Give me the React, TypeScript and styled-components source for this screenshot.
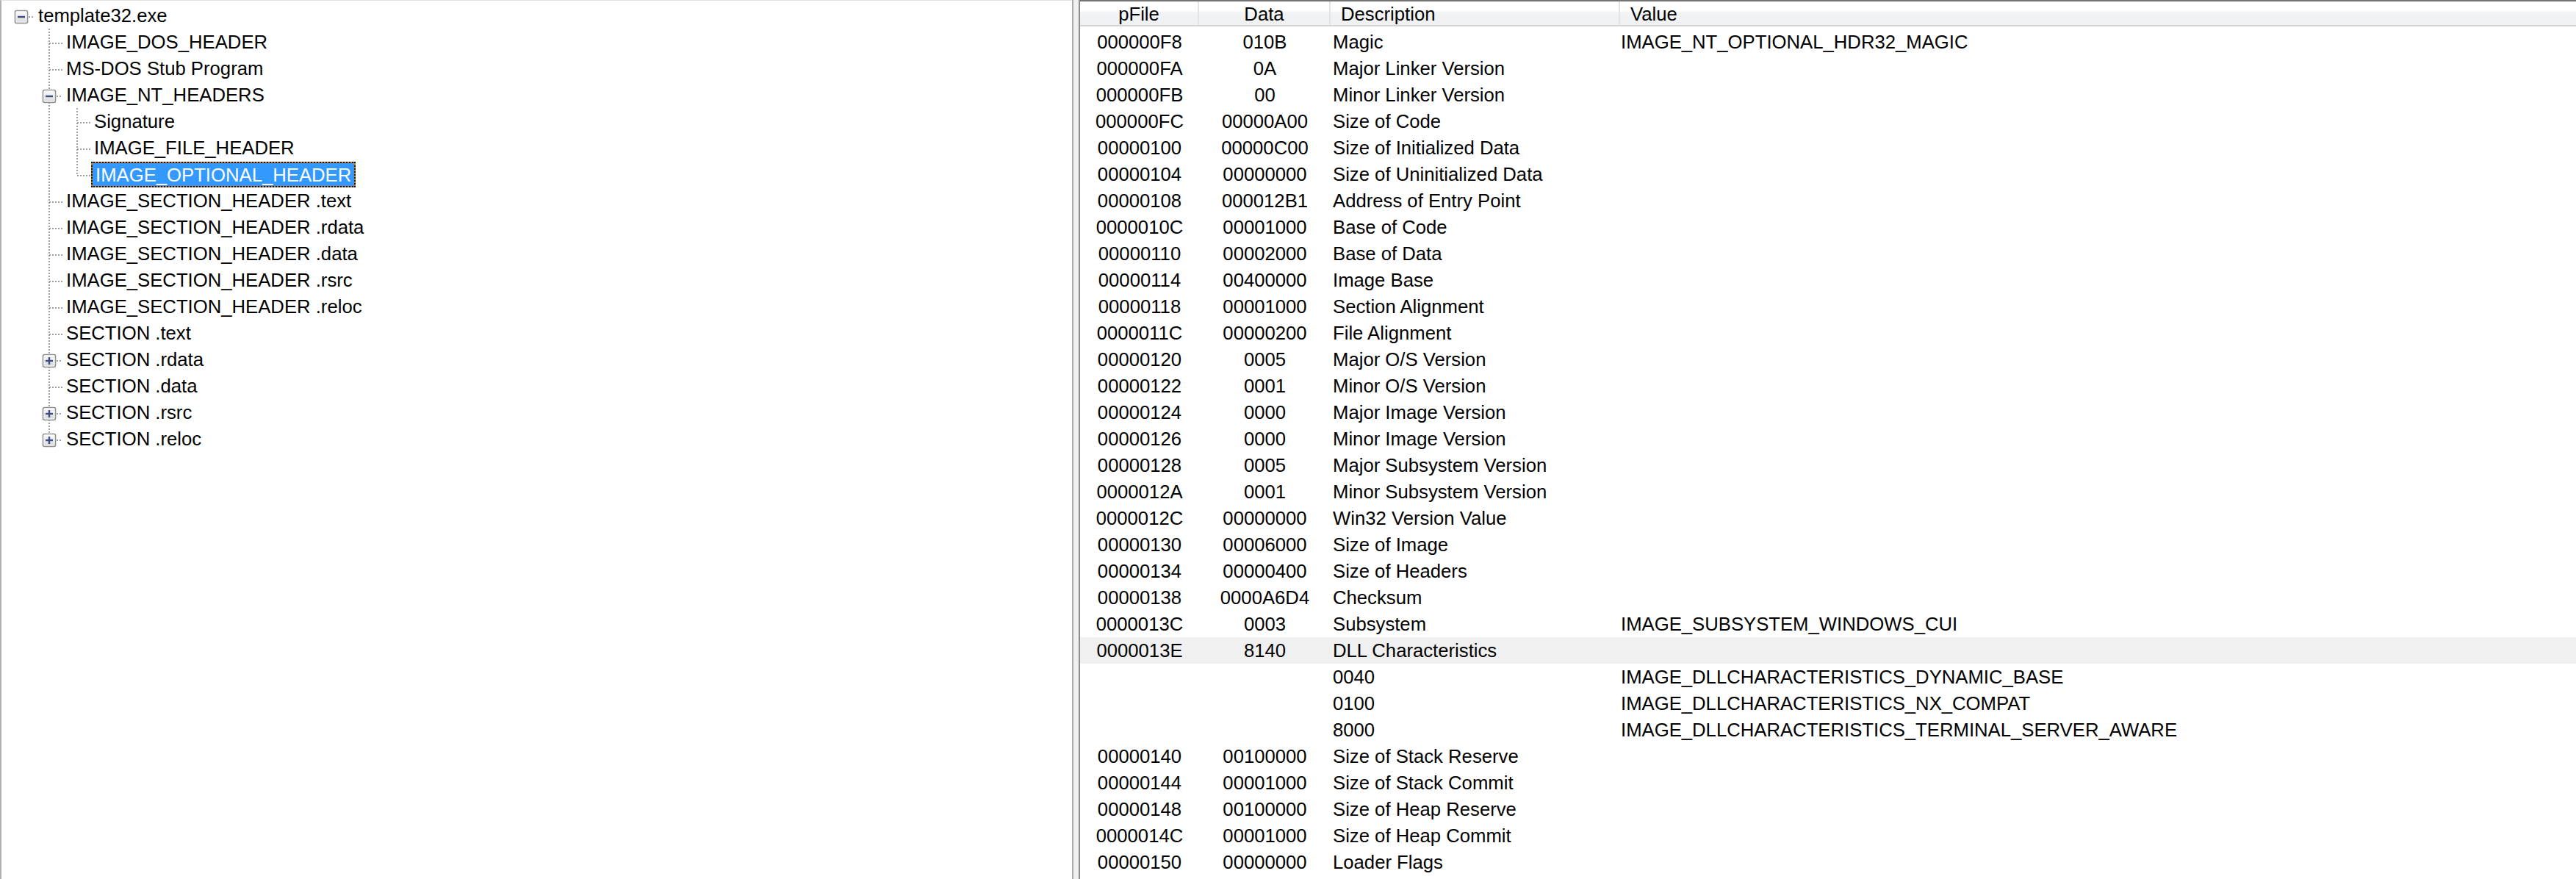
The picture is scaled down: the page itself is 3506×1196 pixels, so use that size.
import React from "react";
import styled, { createGlobalStyle } from "styled-components";

const GlobalStyle = createGlobalStyle`
  html, body {
    margin: 0;
    padding: 0;
    background: #ffffff;
    overflow: hidden;
  }
  body {
    font-family: "Liberation Sans", Arial, sans-serif;
    color: #000000;
  }
`;

const FONT_SIZE = "25.7px";
const LINE = "#a0a0a0";

/* ---------- layout ---------- */

const Window = styled.div`
  display: flex;
  width: 3506px;
  height: 1196px;
  background: #ffffff;
`;

const TreePane = styled.div`
  width: 1459px;
  flex: none;
  box-sizing: border-box;
  border-left: 2px solid #b0b0b0;
  border-top: 1px solid #e2e2e2;
  padding-top: 2px;
  background: #ffffff;
  overflow: hidden;
`;

const Splitter = styled.div`
  width: 11px;
  flex: none;
  box-sizing: border-box;
  border-left: 2px solid #a9a9a9;
  border-right: 2px solid #8e8e8e;
  background: #f0f0f0;
`;

const ListPane = styled.div`
  flex: 1;
  min-width: 0;
  display: flex;
  flex-direction: column;
  border-top: 2px solid #737373;
  background: #ffffff;
  overflow: hidden;
`;

/* ---------- tree ---------- */

const TreeRow = styled.div`
  display: flex;
  align-items: center;
  height: 36px;
  padding-left: 8px;
  font-size: ${FONT_SIZE};
  line-height: 36px;
  white-space: nowrap;
`;

const GuideSvg = styled.svg`
  flex: none;
  display: block;
`;

const TreeLabel = styled.span<{ $selected?: boolean }>`
  margin-left: ${(p) => (p.$selected ? "0px" : "4px")};
  padding: 0 ${(p) => (p.$selected ? "4px" : "0px")};
  height: ${(p) => (p.$selected ? "35px" : "36px")};
  line-height: ${(p) => (p.$selected ? "33px" : "36px")};
  box-sizing: border-box;
  color: ${(p) => (p.$selected ? "#ffffff" : "#000000")};
  background: ${(p) => (p.$selected ? "#3399ff" : "transparent")};
  border: ${(p) => (p.$selected ? "2px solid #c8741e" : "0")};
  outline: ${(p) => (p.$selected ? "2px dotted #151515" : "none")};
  outline-offset: -2px;
`;

type Btn = "minus" | "plus" | null;

interface TreeNode {
  label: string;
  button?: Btn;
  selected?: boolean;
  children?: TreeNode[];
}

const tree: TreeNode = {
  label: "template32.exe",
  button: "minus",
  children: [
    { label: "IMAGE_DOS_HEADER" },
    { label: "MS-DOS Stub Program" },
    {
      label: "IMAGE_NT_HEADERS",
      button: "minus",
      children: [
        { label: "Signature" },
        { label: "IMAGE_FILE_HEADER" },
        { label: "IMAGE_OPTIONAL_HEADER", selected: true },
      ],
    },
    { label: "IMAGE_SECTION_HEADER .text" },
    { label: "IMAGE_SECTION_HEADER .rdata" },
    { label: "IMAGE_SECTION_HEADER .data" },
    { label: "IMAGE_SECTION_HEADER .rsrc" },
    { label: "IMAGE_SECTION_HEADER .reloc" },
    { label: "SECTION .text" },
    { label: "SECTION .rdata", button: "plus" },
    { label: "SECTION .data" },
    { label: "SECTION .rsrc", button: "plus" },
    { label: "SECTION .reloc", button: "plus" },
  ],
};

interface FlatRow {
  node: TreeNode;
  level: number;
  hasNext: boolean;
  guides: boolean[];
}

function flatten(
  node: TreeNode,
  level: number,
  hasNext: boolean,
  guides: boolean[],
  out: FlatRow[]
) {
  out.push({ node, level, hasNext, guides });
  const kids = node.children ?? [];
  kids.forEach((c, i) => {
    flatten(
      c,
      level + 1,
      i < kids.length - 1,
      level === 0 ? [false] : [...guides, hasNext],
      out
    );
  });
}

const rows: FlatRow[] = [];
flatten(tree, 0, false, [], rows);

const DOT = "2 2";

function ExpandBox({ kind }: { kind: "minus" | "plus" }) {
  return (
    <g>
      <defs>
        <linearGradient id={`bx-${kind}`} x1="0" y1="0" x2="0" y2="1">
          <stop offset="0" stopColor="#ffffff" />
          <stop offset="1" stopColor="#d6d6d6" />
        </linearGradient>
      </defs>
      <rect
        x="10.5"
        y="11.5"
        width="17"
        height="17"
        rx="2"
        fill={`url(#bx-${kind})`}
        stroke="#8e8f8f"
        strokeWidth="1.6"
      />
      <rect x="12" y="13" width="14" height="14" rx="1" fill="none" stroke="#f6f6f6" strokeWidth="1" />
      <line x1="14" y1="20" x2="24" y2="20" stroke="#3c4d86" strokeWidth="2.4" />
      {kind === "plus" && (
        <line x1="19" y1="15" x2="19" y2="25" stroke="#3c4d86" strokeWidth="2.4" />
      )}
    </g>
  );
}

function Guide({ line }: { line: boolean }) {
  return (
    <GuideSvg width="38" height="36" viewBox="0 0 38 36">
      {line && (
        <line x1="19" y1="0" x2="19" y2="36" stroke={LINE} strokeWidth="2" strokeDasharray={DOT} />
      )}
    </GuideSvg>
  );
}

function Elbow({ root, hasNext, button }: { root: boolean; hasNext: boolean; button: Btn }) {
  return (
    <GuideSvg width="38" height="36" viewBox="0 0 38 36">
      {!root && (
        <line
          x1="19"
          y1="0"
          x2="19"
          y2={hasNext ? 36 : 20}
          stroke={LINE}
          strokeWidth="2"
          strokeDasharray={DOT}
        />
      )}
      <line
        x1={button ? 29 : 19}
        y1="20"
        x2="37"
        y2="20"
        stroke={LINE}
        strokeWidth="2"
        strokeDasharray={DOT}
      />
      {button && <ExpandBox kind={button} />}
    </GuideSvg>
  );
}

function TreeView() {
  return (
    <TreePane>
      {rows.map((r, i) => (
        <TreeRow key={i}>
          {r.guides.map((g, k) => (
            <Guide key={k} line={g} />
          ))}
          <Elbow root={r.level === 0} hasNext={r.hasNext} button={r.node.button ?? null} />
          <TreeLabel $selected={r.node.selected}>{r.node.label}</TreeLabel>
        </TreeRow>
      ))}
    </TreePane>
  );
}

/* ---------- list ---------- */

const COLS = "162px 179px 394px 1fr";

const Header = styled.div`
  display: grid;
  grid-template-columns: ${COLS};
  height: 34px;
  box-sizing: border-box;
  border-bottom: 2px solid #d5d5d5;
  background: linear-gradient(
    to bottom,
    #ffffff 0%,
    #ffffff 40%,
    #f2f3f5 46%,
    #eff0f2 100%
  );
  font-size: ${FONT_SIZE};
  flex: none;
`;

const HeaderCell = styled.div<{ $align: "center" | "left"; $last?: boolean }>`
  box-sizing: border-box;
  padding-top: 3px;
  padding-left: ${(p) => (p.$align === "left" ? "14px" : "0")};
  line-height: 29px;
  text-align: ${(p) => p.$align};
  border-right: ${(p) => (p.$last ? "0" : "2px solid #e3e4e6")};
  white-space: nowrap;
`;

const ListBody = styled.div`
  padding-top: 3px;
  display: flex;
  flex-direction: column;
`;

const ListRow = styled.div<{ $hot?: boolean }>`
  display: grid;
  grid-template-columns: ${COLS};
  height: 36px;
  line-height: 37px;
  font-size: ${FONT_SIZE};
  background: ${(p) => (p.$hot ? "#f0f0f0" : "transparent")};
  white-space: nowrap;
`;

const Cell = styled.div<{ $align: "center" | "left"; $pad?: number }>`
  text-align: ${(p) => p.$align};
  padding-left: ${(p) => p.$pad ?? 0}px;
  overflow: hidden;
`;

type Rec = [string, string, string, string, boolean?];

const records: Rec[] = [
  ["000000F8", "010B", "Magic", "IMAGE_NT_OPTIONAL_HDR32_MAGIC"],
  ["000000FA", "0A", "Major Linker Version", ""],
  ["000000FB", "00", "Minor Linker Version", ""],
  ["000000FC", "00000A00", "Size of Code", ""],
  ["00000100", "00000C00", "Size of Initialized Data", ""],
  ["00000104", "00000000", "Size of Uninitialized Data", ""],
  ["00000108", "000012B1", "Address of Entry Point", ""],
  ["0000010C", "00001000", "Base of Code", ""],
  ["00000110", "00002000", "Base of Data", ""],
  ["00000114", "00400000", "Image Base", ""],
  ["00000118", "00001000", "Section Alignment", ""],
  ["0000011C", "00000200", "File Alignment", ""],
  ["00000120", "0005", "Major O/S Version", ""],
  ["00000122", "0001", "Minor O/S Version", ""],
  ["00000124", "0000", "Major Image Version", ""],
  ["00000126", "0000", "Minor Image Version", ""],
  ["00000128", "0005", "Major Subsystem Version", ""],
  ["0000012A", "0001", "Minor Subsystem Version", ""],
  ["0000012C", "00000000", "Win32 Version Value", ""],
  ["00000130", "00006000", "Size of Image", ""],
  ["00000134", "00000400", "Size of Headers", ""],
  ["00000138", "0000A6D4", "Checksum", ""],
  ["0000013C", "0003", "Subsystem", "IMAGE_SUBSYSTEM_WINDOWS_CUI"],
  ["0000013E", "8140", "DLL Characteristics", "", true],
  ["", "", "0040", "IMAGE_DLLCHARACTERISTICS_DYNAMIC_BASE"],
  ["", "", "0100", "IMAGE_DLLCHARACTERISTICS_NX_COMPAT"],
  ["", "", "8000", "IMAGE_DLLCHARACTERISTICS_TERMINAL_SERVER_AWARE"],
  ["00000140", "00100000", "Size of Stack Reserve", ""],
  ["00000144", "00001000", "Size of Stack Commit", ""],
  ["00000148", "00100000", "Size of Heap Reserve", ""],
  ["0000014C", "00001000", "Size of Heap Commit", ""],
  ["00000150", "00000000", "Loader Flags", ""],
];

function ListView() {
  return (
    <ListPane>
      <Header>
        <HeaderCell $align="center">pFile</HeaderCell>
        <HeaderCell $align="center">Data</HeaderCell>
        <HeaderCell $align="left">Description</HeaderCell>
        <HeaderCell $align="left" $last>
          Value
        </HeaderCell>
      </Header>
      <ListBody>
        {records.map((r, i) => (
          <ListRow key={i} $hot={r[4]}>
            <Cell $align="center">{r[0]}</Cell>
            <Cell $align="center">{r[1]}</Cell>
            <Cell $align="left" $pad={3}>
              {r[2]}
            </Cell>
            <Cell $align="left" $pad={1}>
              {r[3]}
            </Cell>
          </ListRow>
        ))}
      </ListBody>
    </ListPane>
  );
}

export default function App() {
  return (
    <>
      <GlobalStyle />
      <Window>
        <TreeView />
        <Splitter />
        <ListView />
      </Window>
    </>
  );
}
